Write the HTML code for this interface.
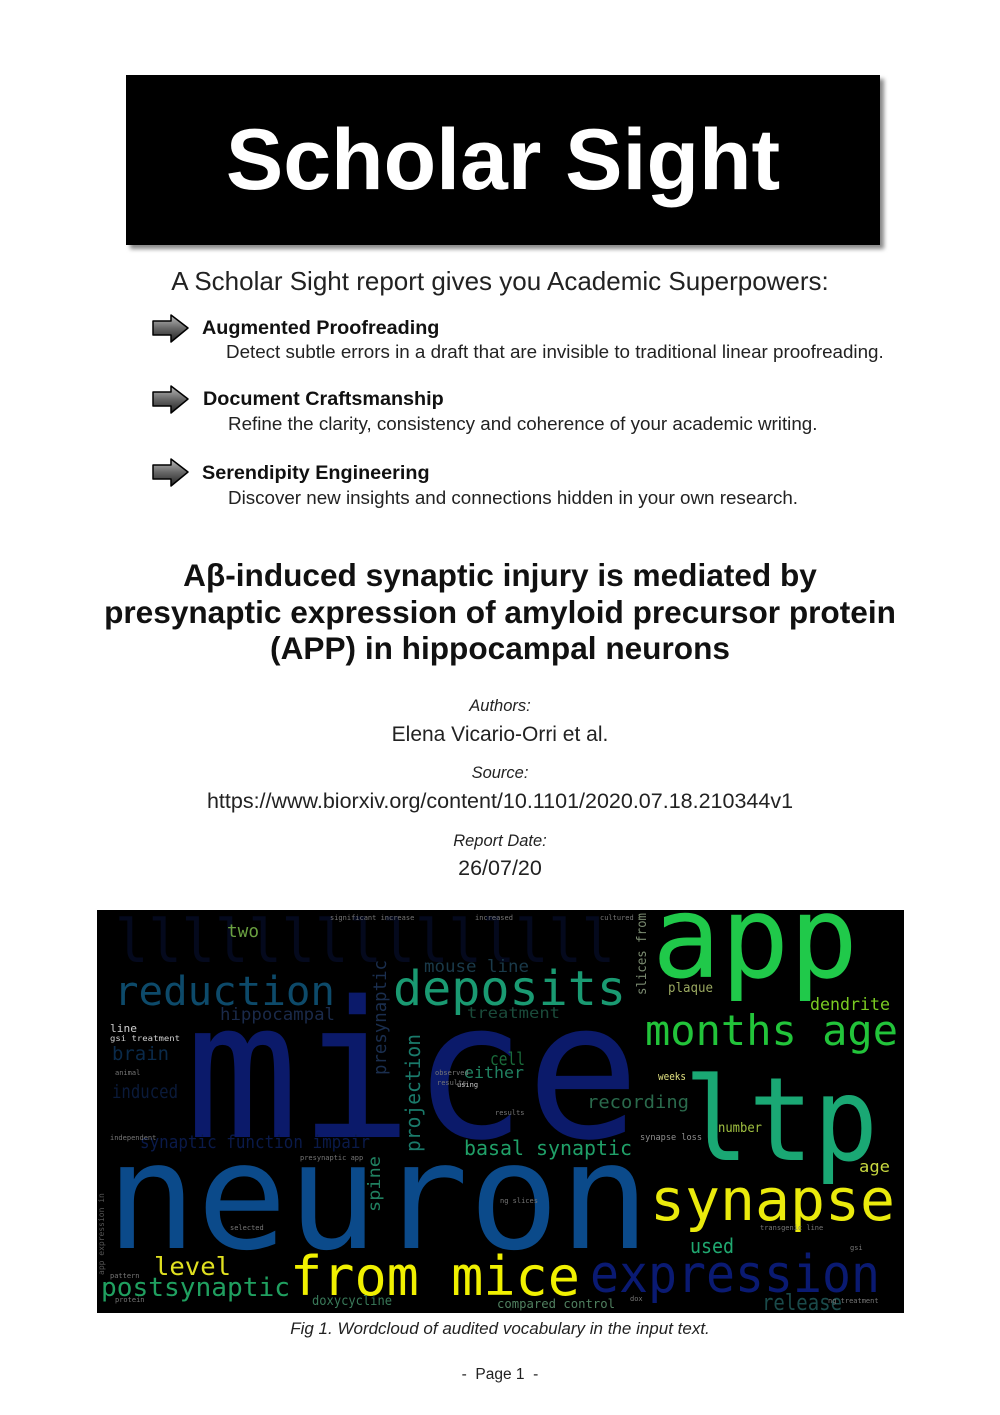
<!DOCTYPE html>
<html><head><meta charset="utf-8">
<style>
html,body{margin:0;padding:0;background:#fff;}
body{width:1000px;height:1415px;position:relative;overflow:hidden;font-family:"Liberation Sans",sans-serif;color:#111;}
.a{position:absolute;white-space:nowrap;}
.c{left:0;width:1000px;text-align:center;}
</style></head><body>
<div class="a" style="left:130px;top:79px;width:754px;height:170px;background:#888;filter:blur(2px);"></div>
<div class="a" style="left:126px;top:75px;width:754px;height:170px;background:#000;"></div>
<div class="a" style="left:126px;top:100px;width:754px;height:120px;line-height:120px;text-align:center;color:#fff;font-weight:bold;font-size:86px;">Scholar Sight</div>

<div class="a c" style="top:265px;line-height:32px;font-size:26px;color:#222;">A Scholar Sight report gives you Academic Superpowers:</div>

<svg class="a" style="left:0;top:0" width="1000" height="520">
<defs><linearGradient id="g" x1="0" y1="0" x2="0" y2="1"><stop offset="0" stop-color="#bbb"/><stop offset=".5" stop-color="#666"/><stop offset="1" stop-color="#222"/></linearGradient></defs>
<g id="ar"><polygon points="153,321 171,321 171,315 188,328 171,342 171,335 153,335" fill="url(#g)" stroke="#000" stroke-width="1.5" stroke-linejoin="round"/></g>
<use href="#ar" transform="translate(0,71)"/>
<use href="#ar" transform="translate(0,144)"/>
</svg>

<div class="a" style="left:202px;top:315px;line-height:26px;font-size:19.8px;font-weight:bold;">Augmented Proofreading</div>
<div class="a" style="left:226px;top:340px;line-height:24px;font-size:18.8px;color:#222;">Detect subtle errors in a draft that are invisible to traditional linear proofreading.</div>
<div class="a" style="left:203px;top:386px;line-height:26px;font-size:19.8px;font-weight:bold;">Document Craftsmanship</div>
<div class="a" style="left:228px;top:412px;line-height:24px;font-size:18.8px;color:#222;">Refine the clarity, consistency and coherence of your academic writing.</div>
<div class="a" style="left:202px;top:460px;line-height:26px;font-size:19.8px;font-weight:bold;">Serendipity Engineering</div>
<div class="a" style="left:228px;top:486px;line-height:24px;font-size:18.8px;color:#222;">Discover new insights and connections hidden in your own research.</div>

<div class="a c" style="top:557px;line-height:36.5px;font-size:31.6px;font-weight:bold;">Aβ-induced synaptic injury is mediated by<br>presynaptic expression of amyloid precursor protein<br>(APP) in hippocampal neurons</div>

<div class="a c" style="top:696px;line-height:20px;font-size:16.5px;font-style:italic;color:#222;">Authors:</div>
<div class="a c" style="top:722px;line-height:26px;font-size:21px;color:#222;">Elena Vicario-Orri et al.</div>
<div class="a c" style="top:763px;line-height:20px;font-size:16.5px;font-style:italic;color:#222;">Source:</div>
<div class="a c" style="top:788px;line-height:26px;font-size:21.5px;color:#222;">https://www.biorxiv.org/content/10.1101/2020.07.18.210344v1</div>
<div class="a c" style="top:831px;line-height:20px;font-size:16.5px;font-style:italic;color:#222;">Report Date:</div>
<div class="a c" style="top:855px;line-height:26px;font-size:21.5px;color:#222;">26/07/20</div>

<svg class="a" style="left:97px;top:910px" width="807" height="403" viewBox="97 910 807 403" font-family="DejaVu Sans Mono, Liberation Mono, monospace">
<rect x="97" y="910" width="807" height="403" fill="#000"/>
<g fill="#0a1540" font-size="60" opacity=".45">
<text x="115" y="962" textLength="500" lengthAdjust="spacingAndGlyphs">lllllllllllllll</text>
</g>
<text x="185" y="1137" font-size="190" fill="#0b1a6a" textLength="455" lengthAdjust="spacingAndGlyphs">mice</text>
<text x="106" y="1248" font-size="148" fill="#0b4a8a" textLength="544" lengthAdjust="spacingAndGlyphs">neuron</text>
<text x="652" y="977" font-size="114" fill="#20c94a" textLength="206" lengthAdjust="spacingAndGlyphs">app</text>
<text x="684" y="1160" font-size="116" fill="#1aa874" textLength="194" lengthAdjust="spacingAndGlyphs">ltp</text>
<text x="645" y="1045" font-size="42" fill="#22c43a" textLength="253" lengthAdjust="spacingAndGlyphs">months age</text>
<text x="810" y="1010" font-size="17" fill="#7acc22" textLength="80" lengthAdjust="spacingAndGlyphs">dendrite</text>
<text x="668" y="992" font-size="13" fill="#9aa860" textLength="45" lengthAdjust="spacingAndGlyphs">plaque</text>
<text x="0" y="0" font-size="13" fill="#7a8a70" transform="translate(646,995) rotate(-90)" textLength="82" lengthAdjust="spacingAndGlyphs">slices from</text>
<text x="650" y="1220" font-size="58" fill="#eaea0c" textLength="245" lengthAdjust="spacingAndGlyphs">synapse</text>
<text x="859" y="1172" font-size="16" fill="#c8d840" textLength="31" lengthAdjust="spacingAndGlyphs">age</text>
<text x="718" y="1132" font-size="13" fill="#a0c040" textLength="44" lengthAdjust="spacingAndGlyphs">number</text>
<text x="658" y="1080" font-size="11" fill="#e0e080" textLength="28" lengthAdjust="spacingAndGlyphs">weeks</text>
<text x="587" y="1108" font-size="18" fill="#2a6a4c" textLength="102" lengthAdjust="spacingAndGlyphs">recording</text>
<text x="640" y="1140" font-size="9" fill="#909090" textLength="62" lengthAdjust="spacingAndGlyphs">synapse loss</text>
<text x="690" y="1253" font-size="20" fill="#20a870" textLength="44" lengthAdjust="spacingAndGlyphs">used</text>
<text x="590" y="1292" font-size="52" fill="#0a1a72" textLength="290" lengthAdjust="spacingAndGlyphs">expression</text>
<text x="762" y="1310" font-size="22" fill="#1a4a4a" textLength="80" lengthAdjust="spacingAndGlyphs">release</text>
<text x="290" y="1295" font-size="54" fill="#f0f000" textLength="290" lengthAdjust="spacingAndGlyphs">from mice</text>
<text x="154" y="1275" font-size="25" fill="#e0e020" textLength="77" lengthAdjust="spacingAndGlyphs">level</text>
<text x="101" y="1296" font-size="26" fill="#20a060" textLength="189" lengthAdjust="spacingAndGlyphs">postsynaptic</text>
<text x="312" y="1305" font-size="13" fill="#3a7a5a" textLength="80" lengthAdjust="spacingAndGlyphs">doxycycline</text>
<text x="497" y="1308" font-size="12" fill="#508060" textLength="118" lengthAdjust="spacingAndGlyphs">compared control</text>
<text x="464" y="1155" font-size="20" fill="#20a068" textLength="168" lengthAdjust="spacingAndGlyphs">basal synaptic</text>
<text x="0" y="0" font-size="20" fill="#1a7a6a" transform="translate(420,1152) rotate(-90)" textLength="118" lengthAdjust="spacingAndGlyphs">projection</text>
<text x="0" y="0" font-size="18" fill="#1a2e4e" transform="translate(386,1075) rotate(-90)" textLength="115" lengthAdjust="spacingAndGlyphs">presynaptic</text>
<text x="0" y="0" font-size="17" fill="#208060" transform="translate(380,1212) rotate(-90)" textLength="56" lengthAdjust="spacingAndGlyphs">spine</text>
<text x="490" y="1065" font-size="18" fill="#1a6a3a" textLength="35" lengthAdjust="spacingAndGlyphs">cell</text>
<text x="464" y="1078" font-size="16" fill="#208060" textLength="60" lengthAdjust="spacingAndGlyphs">either</text>
<text x="393" y="1005" font-size="48" fill="#1a9a72" textLength="233" lengthAdjust="spacingAndGlyphs">deposits</text>
<text x="114" y="1005" font-size="40" fill="#0d4a6a" textLength="221" lengthAdjust="spacingAndGlyphs">reduction</text>
<text x="467" y="1018" font-size="15" fill="#1a4a3a" textLength="93" lengthAdjust="spacingAndGlyphs">treatment</text>
<text x="424" y="972" font-size="17" fill="#1a3a4a" textLength="105" lengthAdjust="spacingAndGlyphs">mouse line</text>
<text x="220" y="1020" font-size="17" fill="#1a2a4a" textLength="115" lengthAdjust="spacingAndGlyphs">hippocampal</text>
<text x="227" y="937" font-size="18" fill="#6aa040" textLength="32" lengthAdjust="spacingAndGlyphs">two</text>
<text x="110" y="1032" font-size="11" fill="#d0d0d0" textLength="27" lengthAdjust="spacingAndGlyphs">line</text>
<text x="110" y="1041" font-size="8" fill="#d0d0d0" textLength="70" lengthAdjust="spacingAndGlyphs">gsi treatment</text>
<text x="112" y="1060" font-size="19" fill="#0a2a4a" textLength="57" lengthAdjust="spacingAndGlyphs">brain</text>
<text x="112" y="1098" font-size="19" fill="#0a1a3a" textLength="66" lengthAdjust="spacingAndGlyphs">induced</text>
<text x="140" y="1148" font-size="18" fill="#0a1a4a" textLength="230" lengthAdjust="spacingAndGlyphs">synaptic function impair</text>
<g fill="#777" font-size="7">
<text x="330" y="920">significant increase</text><text x="475" y="920">increased</text><text x="600" y="920">cultured</text>
<text x="435" y="1075">observed</text><text x="437" y="1085">results</text><text x="300" y="1160">presynaptic app</text>
<text x="500" y="1203">ng slices</text><text x="230" y="1230">selected</text><text x="495" y="1115">results</text>
<text x="115" y="1075">animal</text><text x="110" y="1140">independent</text><text x="760" y="1230">transgenic line</text>
<text x="110" y="1278">pattern</text><text x="115" y="1302">protein</text><text x="630" y="1301">dox</text><text x="828" y="1303">ng treatment</text>
<text x="457" y="1087" fill="#ccc">using</text><text x="850" y="1250">gsi</text>
</g>
<text x="0" y="0" font-size="8" fill="#555" transform="translate(104,1275) rotate(-90)">app expression in</text>
</svg>

<div class="a c" style="top:1318px;line-height:22px;font-size:17px;font-style:italic;color:#222;">Fig 1. Wordcloud of audited vocabulary in the input text.</div>
<div class="a c" style="top:1364px;line-height:22px;font-size:15.5px;color:#222;">-&nbsp; Page 1&nbsp; -</div>
</body></html>
